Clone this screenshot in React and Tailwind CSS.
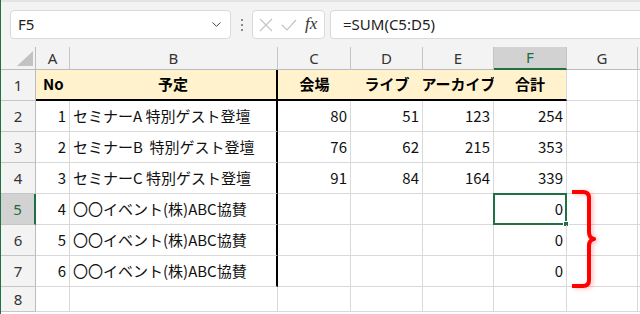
import { ChevronDown } from "lucide-react";

const cols = ["A", "B", "C", "D", "E", "F", "G", ""];

const rows = [
  ["1", "セミナーA 特別ゲスト登壇", "80", "51", "123", "254"],
  ["2", "セミナーB  特別ゲスト登壇", "76", "62", "215", "353"],
  ["3", "セミナーC 特別ゲスト登壇", "91", "84", "164", "339"],
  ["4", "〇〇イベント(株)ABC協賛", "", "", "", "0"],
  ["5", "〇〇イベント(株)ABC協賛", "", "", "", "0"],
  ["6", "〇〇イベント(株)ABC協賛", "", "", "", "0"],
];

const heads = ["No", "予定", "会場", "ライブ", "アーカイブ", "合計"];

const jp = { fontFamily: '"Noto Sans CJK JP", "Noto Sans", sans-serif' };
const ui = { fontFamily: '"Noto Sans", "Liberation Sans", sans-serif' };

function ColHead({ label }) {
  const sel = label === "F";
  return (
    <div
      className={`h-[23px] flex items-center justify-center text-[15px] border-r border-r-[#c6c6c6] ${
        sel ? "bg-[#d2d2d2] text-[#1e6b3f] border-b-2 border-b-[#1f7145]" : "text-[#333] border-b border-b-[#bcbcbc]"
      }`}
      style={ui}
    >
      {label}
    </div>
  );
}

function RowHead({ n, h }) {
  const sel = n === 5;
  return (
    <div
      className={`flex items-center justify-center text-[15px] border-b border-b-[#c6c6c6] ${h} ${
        sel ? "bg-[#d2d2d2] text-[#1e6b3f] border-r-2 border-r-[#1f7145]" : "bg-[#f3f3f3] text-[#333] border-r border-r-[#bcbcbc]"
      }`}
      style={ui}
    >
      {n}
    </div>
  );
}

export default function App() {
  return (
    <div className="w-[640px] h-[314px] overflow-hidden bg-white border-l border-l-[#1f7145] relative">
      {/* formula bar */}
      <div className="h-[47px] bg-[#f3f3f3] border-t-2 border-t-[#e4e4e4] flex items-center pl-[9px] gap-0">
        <div className="w-[221px] h-[29px] bg-white border border-[#dadada] rounded-[4px] flex items-center justify-between pl-[7px] pr-[6px]">
          <span className="text-[15px] text-[#222]" style={ui}>F5</span>
          <ChevronDown size={15} strokeWidth={1.6} className="text-[#444]" />
        </div>
        <div className="w-[21px] flex flex-col items-center gap-[3px]">
          <span className="w-[2px] h-[2px] bg-[#8a8a8a]" />
          <span className="w-[2px] h-[2px] bg-[#8a8a8a]" />
          <span className="w-[2px] h-[2px] bg-[#8a8a8a]" />
        </div>
        <div className="w-[73px] h-[29px] bg-white border border-[#dadada] rounded-[4px] flex items-center pl-[6px] gap-[8px]">
          <svg width="14" height="14" viewBox="0 0 14 14">
            <path d="M1 1 L13 13 M13 1 L1 13" stroke="#c4c4c4" strokeWidth="1.2" fill="none" />
          </svg>
          <svg width="16" height="12" viewBox="0 0 16 12">
            <path d="M1 6 L6 11 L15 1" stroke="#c4c4c4" strokeWidth="1.2" fill="none" />
          </svg>
          <span className="text-[17px] italic text-[#333] leading-none -mt-[2px]" style={{ fontFamily: '"Liberation Serif", serif' }}>
            fx
          </span>
        </div>
        <div className="ml-[5px] flex-1 h-[29px] bg-white border border-[#dadada] border-r-0 rounded-l-[4px] flex items-center pl-[12px]">
          <span className="text-[15px] text-[#222]" style={ui}>=SUM(C5:D5)</span>
        </div>
      </div>

      {/* sheet */}
      <div className="relative grid grid-cols-[35px_34px_208px_73px_72px_71px_73px_71px_10px]">
        {/* corner */}
        <div className="h-[23px] bg-[#f3f3f3] border-r border-r-[#bcbcbc] border-b border-b-[#bcbcbc] flex items-end justify-end pr-[2px] pb-[3px]">
          <svg width="16" height="15" viewBox="0 0 16 15">
            <path d="M16 0 L16 15 L0 15 Z" fill="#c2c2c2" />
          </svg>
        </div>
        {cols.map((c, i) => (
          <div key={i} className="bg-[#f3f3f3]">
            {c ? <ColHead label={c} /> : <div className="h-[23px] border-b border-b-[#bcbcbc]" />}
          </div>
        ))}

        {/* row 1 */}
        <RowHead n={1} h="h-[31px]" />
        {heads.map((t, i) => (
          <div
            key={i}
            className={`h-[31px] whitespace-nowrap bg-[#fff2cc] border-b-2 border-b-black flex items-center font-bold text-[15px] text-black ${
              i === 0 ? "justify-start pl-[7px]" : "justify-center"
            } ${i === 1 ? "border-r-2 border-r-black" : i === 5 ? "border-r border-r-[#d9d9d9]" : ""}`}
            style={jp}
          >
            {t}
          </div>
        ))}
        <div className="h-[31px] border-b border-b-[#d9d9d9] border-r border-r-[#d9d9d9]" />
        <div className="h-[31px] border-b border-b-[#d9d9d9]" />

        {rows.map((r, ri) => (
          <Row key={ri} r={r} n={ri + 2} />
        ))}

        {/* row 8 */}
        <RowHead n={8} h="h-[25px]" />
        {[0, 1, 2, 3, 4, 5, 6, 7].map((k) => (
          <div key={k} className={`h-[25px] border-b border-b-[#d9d9d9] ${k < 7 ? "border-r border-r-[#d9d9d9]" : ""}`} />
        ))}

        {/* brace */}
        <svg className="absolute left-0 top-0 pointer-events-none" width="640" height="270" viewBox="0 47 640 270" style={{ overflow: "visible" }}>
          <defs>
            <filter id="sh" x="-50%" y="-20%" width="200%" height="140%">
              <feDropShadow dx="2" dy="1" stdDeviation="2" floodColor="#ff0000" floodOpacity="0.25" />
            </filter>
          </defs>
          <path
            d="M571 192 H582 Q588 192 588 198 V232 Q588 238 593 239 Q588 240 588 246 V280 Q588 286 582 286 H571"
            stroke="#ff0000"
            strokeWidth="4"
            fill="none"
            strokeLinejoin="round"
            filter="url(#sh)"
          />
        </svg>
      </div>
    </div>
  );
}

function Row({ r, n }) {
  return (
    <>
      <RowHead n={n} h="h-[31px]" />
      {r.map((v, i) => {
        const sel = n === 5 && i === 5;
        return (
          <div
            key={i}
            className={`relative h-[31px] whitespace-pre flex items-center text-[15px] text-[#111] border-b border-b-[#d9d9d9] ${
              i === 1 ? "justify-start pl-[3px] border-r-2 border-r-black" : "justify-end pr-[3px] border-r border-r-[#d9d9d9]"
            }`}
            style={jp}
          >
            {v}
            {sel && (
              <>
                <div className="absolute -left-[1px] -top-[1px] right-[-1px] bottom-[-1px] border-2 border-[#1f7145]" />
                <div className="absolute -right-[3px] -bottom-[3px] w-[6px] h-[6px] bg-[#1f7145] border border-white" />
              </>
            )}
          </div>
        );
      })}
      <div className="h-[31px] border-b border-b-[#d9d9d9] border-r border-r-[#d9d9d9]" />
      <div className="h-[31px] border-b border-b-[#d9d9d9]" />
    </>
  );
}
